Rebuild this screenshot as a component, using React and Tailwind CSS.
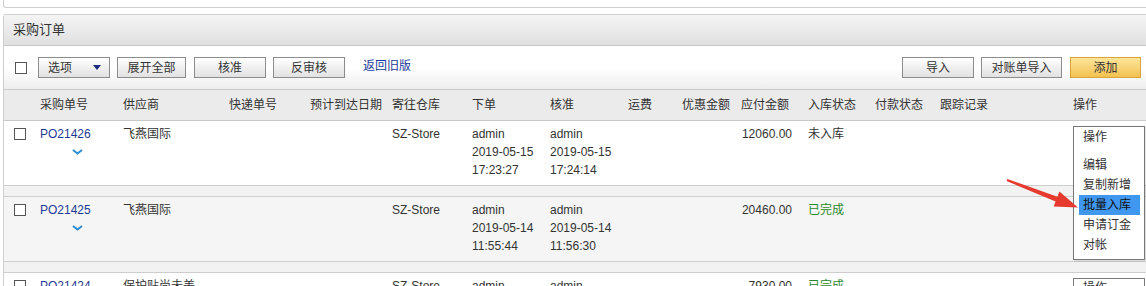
import React from 'react';

const cols = [36, 83, 106, 81, 82, 80, 78, 78, 54, 59, 67, 67, 65, 133];

const headers = ['', '采购单号', '供应商', '快递单号', '预计到达日期', '寄往仓库', '下单', '核准', '运费', '优惠金额', '应付金额', '入库状态', '付款状态', '跟踪记录', '操作'];

const orders = [
  { no: 'PO21426', supplier: '飞燕国际', store: 'SZ-Store', made: ['admin', '2019-05-15', '17:23:27'], ok: ['admin', '2019-05-15', '17:24:14'], amount: '12060.00', status: '未入库', done: false, bg: 'bg-white' },
  { no: 'PO21425', supplier: '飞燕国际', store: 'SZ-Store', made: ['admin', '2019-05-14', '11:55:44'], ok: ['admin', '2019-05-14', '11:56:30'], amount: '20460.00', status: '已完成', done: true, bg: 'bg-[#f5f5f5]' },
  { no: 'PO21424', supplier: '保护贴尚未美', store: 'SZ-Store', made: ['admin', '2019-05-13', '10:12:05'], ok: ['admin', '2019-05-13', '10:13:40'], amount: '7930.00', status: '已完成', done: true, bg: 'bg-white' },
];

const Box = () => <span className="block w-[12px] h-[12px] border border-[#555] bg-white" />;

const Btn = ({ children, w, gold }) => (
  <button
    className={
      gold
        ? 'h-[21px] border border-[#d6a53c] bg-linear-to-b from-[#fde59a] to-[#f3c14e] text-[#333] text-[12px] ' + w
        : 'h-[21px] border border-[#8c8c8c] bg-linear-to-b from-white to-[#e2e2e2] text-[#333] text-[12px] ' + w
    }
  >
    {children}
  </button>
);

const Caret = () => (
  <svg width="8" height="5" viewBox="0 0 8 5"><path d="M0 0h8L4 5z" fill="#1b2a80" /></svg>
);

const Chevron = () => (
  <svg width="11" height="6" viewBox="0 0 11 6"><path d="M1 1l4.5 3.5L10 1" fill="none" stroke="#2d8bd2" strokeWidth="2" /></svg>
);

const Cell = ({ i, children, className = '' }) => (
  <div style={{ width: cols[i] }} className={'shrink-0 ' + className}>{children}</div>
);

export default function App() {
  return (
    <div className="relative w-[1146px] h-[286px] overflow-hidden bg-white text-[12px] text-[#333] font-['Liberation_Sans','Noto_Sans_CJK_SC',sans-serif]">
      {/* previous panel edge */}
      <div className="h-[8px] ml-[3px] border-l border-b border-[#cfcfcf] rounded-bl-[3px]" />

      <div className="mt-[6px] ml-[3px] w-[1150px] border-l border-t border-[#cfcfcf] rounded-tl-[3px]">
        <div className="h-[31px] flex items-center pl-[9px] text-[13px] bg-linear-to-b from-[#f4f4f4] to-[#e0e0e0] border-b border-[#c6c6c6]">
          采购订单
        </div>

        {/* toolbar */}
        <div className="h-[43px] flex items-center pl-[11px] pr-[12px] bg-linear-to-b from-white via-white to-[#eeeeee]">
          <Box />
          <button className="ml-[11px] h-[21px] w-[72px] border border-[#8c8c8c] bg-linear-to-b from-white to-[#e2e2e2] flex items-center justify-between pl-[9px] pr-[8px]">
            <span>选项</span>
            <Caret />
          </button>
          <div className="ml-[7px]"><Btn w="w-[69px]">展开全部</Btn></div>
          <div className="ml-[8px]"><Btn w="w-[72px]">核准</Btn></div>
          <div className="ml-[7px]"><Btn w="w-[72px]">反审核</Btn></div>
          <a className="ml-[18px] text-[#1a3a9c] -mt-[3px]">返回旧版</a>
          <div className="ml-auto flex items-center gap-[7px]">
            <Btn w="w-[72px]">导入</Btn>
            <Btn w="w-[81px]">对账单导入</Btn>
            <div className="ml-[1px]"><Btn w="w-[71px]" gold>添加</Btn></div>
          </div>
        </div>

        {/* header */}
        <div className="h-[32px] flex items-center bg-[#ebebeb] border-t border-b border-[#c9c9c9]">
          {headers.map((h, i) => (
            <div key={i} style={i < cols.length ? { width: cols[i] } : undefined} className={i < cols.length ? 'shrink-0' : 'flex-1'}>
              {h}
            </div>
          ))}
        </div>

        {orders.map((o, r) => (
          <div key={o.no}>
            {r > 0 && <div className="h-[11px] bg-[#f2f2f2] border-b border-[#cdcdcd]" />}
            <div className={'relative h-[65px] flex pt-[4px] leading-[18px] border-b border-[#cdcdcd] ' + o.bg}>
              <Cell i={0} className="pl-[10px] pt-[3px]"><Box /></Cell>
              <Cell i={1} className="flex flex-col">
                <span className="text-[#1f3a94]">{o.no}</span>
                <span className="pl-[32px] pt-[6px]"><Chevron /></span>
              </Cell>
              <Cell i={2}>{o.supplier}</Cell>
              <Cell i={3} />
              <Cell i={4} />
              <Cell i={5}>{o.store}</Cell>
              <Cell i={6} className="flex flex-col">{o.made.map((t, k) => <span key={k}>{t}</span>)}</Cell>
              <Cell i={7} className="flex flex-col">{o.ok.map((t, k) => <span key={k}>{t}</span>)}</Cell>
              <Cell i={8} />
              <Cell i={9} />
              <Cell i={10} className="text-right pr-[16px]">{o.amount}</Cell>
              <Cell i={11} className={o.done ? 'text-[#2a8a2a]' : ''}>{o.status}</Cell>
              <Cell i={12} />
              <Cell i={13} />
              <div className="relative flex-1">
                <div className="absolute left-0 top-[1px] w-[72px] h-[20px] border border-[#7a7a7a] bg-white flex items-center justify-between pl-[9px] pr-[5px]">
                  <span>操作</span>
                  <Caret />
                </div>
                {r === 0 && (
                  <div className="absolute left-0 top-[1px] z-10 w-[72px] h-[134px] border border-[#777] bg-white shadow-[1px_1px_2px_rgba(0,0,0,0.15)] pl-[5px] pr-[4px]">
                    <div className="h-[20px] flex items-center pl-[4px]">操作</div>
                    <div className="h-[8px]" />
                    {['编辑', '复制新增', '批量入库', '申请订金', '对帐'].map((t) => (
                      <div key={t} className={'h-[20px] flex items-center pl-[4px] ' + (t === '批量入库' ? 'bg-[#3f97f0] text-[#111]' : '')}>
                        {t}
                      </div>
                    ))}
                  </div>
                )}
              </div>
            </div>
          </div>
        ))}
      </div>

      {/* red pointer arrow */}
      <svg className="absolute left-[1000px] top-[170px] z-20" width="80" height="42" viewBox="0 0 80 42">
        <polygon points="7.4,9 57.4,26.8 59.4,21.6 78,37.5 53.6,36.6 55.6,31.4 6.6,11" fill="#e63a2e" />
      </svg>
    </div>
  );
}
